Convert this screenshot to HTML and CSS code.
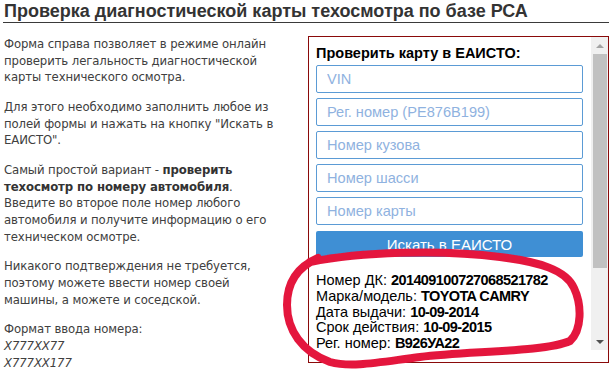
FILE: index.html
```html
<!DOCTYPE html>
<html lang="ru">
<head>
  <meta charset="UTF-8" />
  <title>Проверка диагностической карты</title>
  <link rel="stylesheet" href="styles.css">
</head>
<body>
  <div class="page">
    <h1 class="page-title">Проверка диагностической карты техосмотра по базе РСА</h1>

    <div class="layout">
      <!-- Описание слева -->
      <div class="intro">
        <p>Форма справа позволяет в режиме онлайн проверить легальность диагностической карты технического осмотра.</p>
        <p>Для этого необходимо заполнить любое из полей формы и нажать на кнопку "Искать в ЕАИСТО".</p>
        <p>Самый простой вариант - <b>проверить техосмотр по номеру автомобиля</b>. Введите во второе поле номер любого автомобиля и получите информацию о его техническом осмотре.</p>
        <p>Никакого подтверждения не требуется, поэтому можете ввести номер своей машины, а можете и соседской.</p>
        <p>Формат ввода номера:<br><i>X777XX77</i><br><i>X777XX177</i></p>
      </div>

      <!-- Окно проверки -->
      <div class="check-frame">
        <div class="check-view">
          <div class="check-body">
            <div class="check-title">Проверить карту в ЕАИСТО:</div>
            <form class="check-form" onsubmit="return false;">
              <input type="text" placeholder="VIN">
              <input type="text" placeholder="Рег. номер (РЕ876В199)">
              <input type="text" placeholder="Номер кузова">
              <input type="text" placeholder="Номер шасси">
              <input type="text" placeholder="Номер карты">
              <button type="submit">Искать в ЕАИСТО</button>
            </form>
            <div class="result">
              <div>Номер ДК: <b>201409100727068521782</b></div>
              <div>Марка/модель: <b>TOYOTA CAMRY</b></div>
              <div>Дата выдачи: <b>10-09-2014</b></div>
              <div>Срок действия: <b>10-09-2015</b></div>
              <div>Рег. номер: <b>B926УА22</b></div>
            </div>
          </div>
          <div class="scrollbar">
            <span class="scroll-arrow up"></span>
            <div class="scroll-track"><div class="scroll-thumb"></div></div>
            <span class="scroll-arrow down"></span>
          </div>
        </div>
      </div>
    </div>

    <!-- Пометка маркером поверх результата -->
    <svg class="marker" viewBox="0 0 613 380" width="613" height="380">
      <defs>
        <filter id="soft"><feGaussianBlur stdDeviation="0.7"/></filter>
      </defs>
      <path d="M 310 262 C 360 252, 440 249, 500 257 C 540 262, 566 270, 574 288 C 582 305, 582 330, 570 341 C 545 352, 470 351, 420 357 C 380 362, 352 368, 330 362 C 302 352, 287 330, 287 305 C 287 285, 295 268, 318 258"
            fill="none" stroke="#e4163e" stroke-width="8" stroke-linecap="round" stroke-linejoin="round" filter="url(#soft)"/>
    </svg>
  </div>
</body>
</html>
```

FILE: styles.css
```css
* {
  box-sizing: border-box;
}
body {
  margin: 0;
  background: #fff;
  font-family: 'DejaVu Sans Condensed', 'DejaVu Sans', Tahoma, sans-serif;
  color: #404040;
}
.page {
  position: relative;
  width: 613px;
  height: 380px;
  padding-left: 3px;
  overflow: hidden;
}
/* Заголовок */
.page-title {
  width: 606px;
  margin: 0;
  padding: 1px 0 1px 1px;
  font-family: 'Liberation Sans', Arial, sans-serif;
  font-size: 18px;
  line-height: 20px;
  font-weight: bold;
  color: #333;
  border-bottom: 1px solid #3a3a3a;
}
.layout {
  display: flex;
  gap: 22px;
  margin-top: 13px;
}
/* Текст слева */
.intro {
  width: 283px;
  padding-left: 1px;
  font-size: 13px;
  line-height: 16.67px;
  letter-spacing: -0.1px;
}
.intro p {
  margin: 0 0 13px;
}
.intro b {
  color: #333;
}
/* Рамка с формой */
.check-frame {
  width: 301px;
  height: 327px;
  border: 1px solid #8a0a0a;
  padding-bottom: 12px;
}
.check-view {
  display: flex;
  height: 313px;
}
.check-body {
  flex: 1;
  overflow: hidden;
  padding: 8px 8px 0 7px;
  font-family: 'Liberation Sans', Arial, sans-serif;
  color: #000;
}
.check-title {
  font-size: 14.5px;
  line-height: 17px;
  font-weight: bold;
  margin-bottom: 3px;
}
.check-form {
  display: flex;
  flex-direction: column;
  gap: 5px;
  margin: 0;
}
.check-form input {
  height: 28px;
  width: 100%;
  padding: 0 10px;
  border: 1px solid #5b9bd5;
  border-radius: 2px;
  font-family: 'Liberation Sans', Arial, sans-serif;
  font-size: 14.6px;
  outline: none;
}
.check-form input::placeholder {
  color: #8fb2e0;
}
.check-form button {
  height: 26px;
  margin-top: 1px;
  border: none;
  border-radius: 2px;
  background: #3f8fd4;
  color: #fff;
  font-family: 'Liberation Sans', Arial, sans-serif;
  font-size: 15px;
  cursor: pointer;
}
.result {
  margin-top: 16px;
  font-size: 14.5px;
  line-height: 15.75px;
}
.result b {
  letter-spacing: -0.6px;
}
/* Полоса прокрутки */
.scrollbar {
  width: 17px;
  display: flex;
  flex-direction: column;
  background: #f0f0f0;
}
.scroll-arrow {
  height: 17px;
  display: flex;
  align-items: center;
  justify-content: center;
}
.scroll-arrow::before {
  content: "";
  border-left: 4px solid transparent;
  border-right: 4px solid transparent;
}
.scroll-arrow.up::before {
  border-bottom: 4px solid #a3a3a3;
}
.scroll-arrow.down::before {
  border-top: 4px solid #505050;
}
.scroll-track {
  flex: 1;
  padding: 0 1px 0 2px;
}
.scroll-thumb {
  height: 214px;
  background: #c1c1c1;
}
/* Маркер */
.marker {
  position: absolute;
  top: 0;
  left: 0;
  pointer-events: none;
}
```
